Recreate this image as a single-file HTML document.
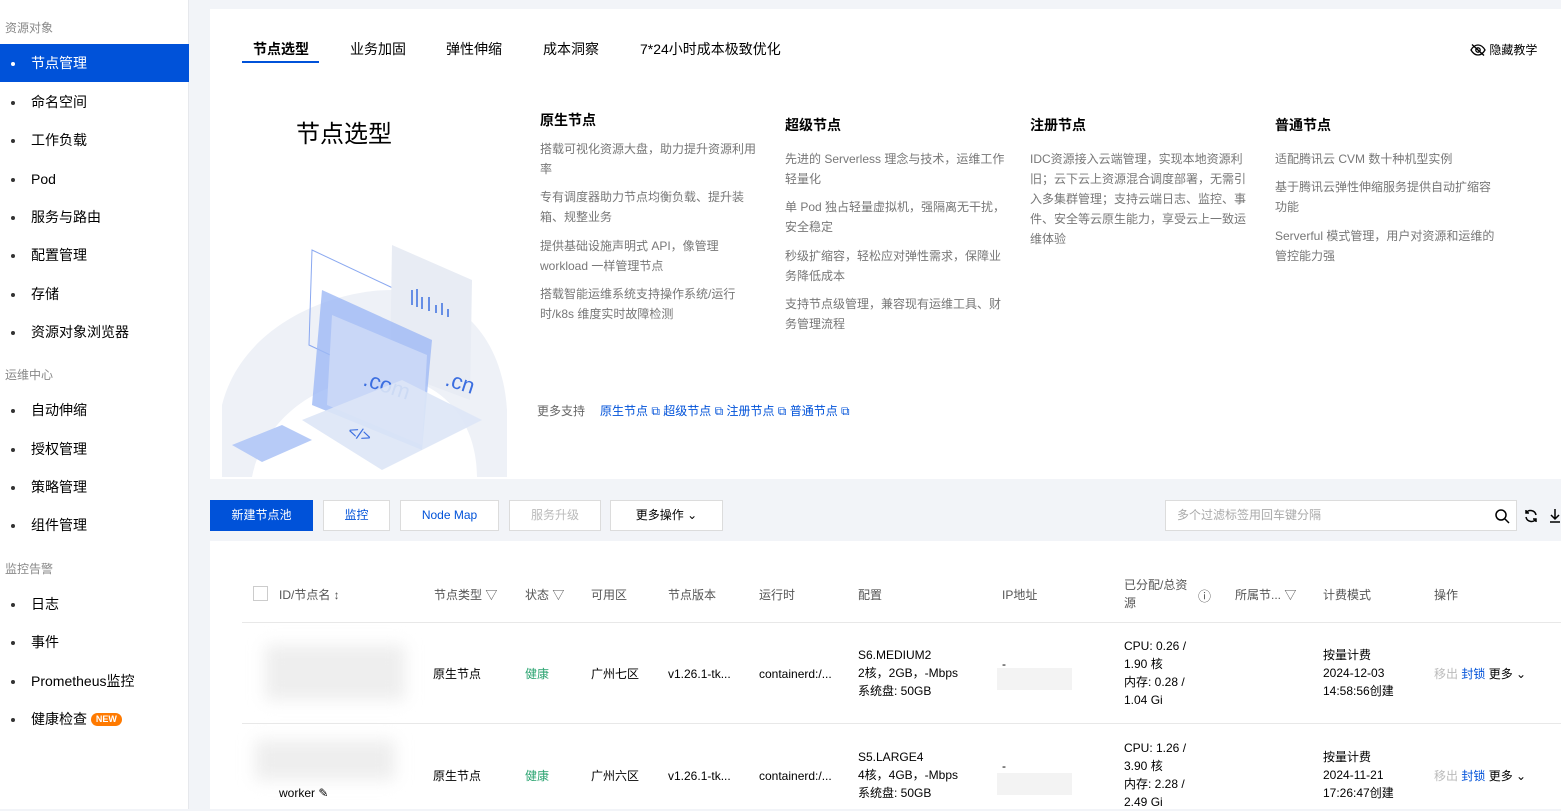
<!DOCTYPE html>
<html><head><meta charset="utf-8"><style>
*{margin:0;padding:0;box-sizing:border-box}
body{width:1561px;height:809px;overflow:hidden;background:#f2f4f8;font-family:"Liberation Sans","Noto Sans CJK SC",sans-serif;color:#000;position:relative;font-size:14px}
.a{position:absolute;white-space:nowrap}
#side{position:absolute;left:0;top:0;width:189px;height:809px;background:#fff;border-right:1px solid #e6e8ec}
.grp{position:absolute;left:5px;font-size:12px;color:#888}
.it{position:absolute;left:0;width:189px;height:38px;line-height:38px;padding-left:31px;font-size:14px;color:#000}
.it:before{content:"";position:absolute;left:11px;top:18px;width:4px;height:4px;border-radius:50%;background:#333}
.it.on{background:#0052d9;color:#fff}.it.on:before{background:#fff}
.card{position:absolute;background:#fff}
.g{color:#777;font-size:12px;line-height:20px}
.h{font-size:14px;font-weight:bold;color:#000}
.btn{position:absolute;top:500px;height:31px;line-height:29px;border:1px solid #dcdcdc;background:#fff;font-size:12px;text-align:center;color:#0052d9}
.th{position:absolute;top:586px;font-size:12px;color:#555}
.td{position:absolute;font-size:12px;color:#000;line-height:18px}
.blur{position:absolute;background:#eee;filter:blur(8px)}
</style></head><body>
<div id="side">
<div class="grp" style="top:19px">资源对象</div>
<div class="it on" style="top:44px">节点管理</div>
<div class="it" style="top:83px">命名空间</div>
<div class="it" style="top:121px">工作负载</div>
<div class="it" style="top:160px">Pod</div>
<div class="it" style="top:198px">服务与路由</div>
<div class="it" style="top:236px">配置管理</div>
<div class="it" style="top:275px">存储</div>
<div class="it" style="top:313px">资源对象浏览器</div>
<div class="grp" style="top:366px">运维中心</div>
<div class="it" style="top:391px">自动伸缩</div>
<div class="it" style="top:430px">授权管理</div>
<div class="it" style="top:468px">策略管理</div>
<div class="it" style="top:506px">组件管理</div>
<div class="grp" style="top:560px">监控告警</div>
<div class="it" style="top:585px">日志</div>
<div class="it" style="top:623px">事件</div>
<div class="it" style="top:662px">Prometheus监控</div>
<div class="it" style="top:700px">健康检查 <span style="display:inline-block;background:#ff7a00;color:#fff;font-size:9px;font-weight:bold;line-height:13px;padding:0 5px;border-radius:7px;vertical-align:2px">NEW</span></div>
</div>

<div class="card" style="left:210px;top:9px;width:1351px;height:470px"></div>
<div class="a" style="left:253px;top:39px;font-size:14px;font-weight:bold">节点选型</div>
<div class="a" style="left:242px;top:61px;width:77px;height:2px;background:#0052d9"></div>
<div class="a" style="left:350px;top:39px">业务加固</div>
<div class="a" style="left:446px;top:39px">弹性伸缩</div>
<div class="a" style="left:543px;top:39px">成本洞察</div>
<div class="a" style="left:640px;top:39px">7*24小时成本极致优化</div>
<div class="a" style="left:1470px;top:41px;font-size:12px">
<svg width="16" height="12" viewBox="0 0 16 12" style="vertical-align:-2px"><path d="M1 6C3 2.5 5.5 1 8 1s5 1.5 7 5c-2 3.5-4.5 5-7 5S3 9.5 1 6z" fill="none" stroke="#000" stroke-width="1.3"/><circle cx="8" cy="6" r="2.2" fill="none" stroke="#000" stroke-width="1.3"/><path d="M2 0.5l12 11" stroke="#000" stroke-width="1.3"/></svg> 隐藏教学</div>
<div class="a" style="left:296px;top:114px;font-size:24px">节点选型</div>
<svg class="a" style="left:222px;top:245px" width="285" height="232" viewBox="0 0 285 232">
<path d="M0 160C20 80 110 45 170 45c60 0 110 40 115 120v67h-30c0-60-40-100-90-100C90 132 40 180 30 232H0z" fill="#eef1f7"/>
<path d="M90 5l85 40-3 95-85-40z" fill="none" stroke="#8aa8f0"/>
<path d="M170 0l80 35-2 120-80-30z" fill="#e8ecf4"/>
<path d="M100 45l110 50-10 110-110-45z" fill="#9db9f5" opacity=".8"/>
<path d="M110 70l95 40-5 90-95-40z" fill="#c9d7f7"/>
<text x="140" y="140" font-size="22" fill="#3b6ee0" transform="rotate(18 140 140)">.com</text>
<text x="222" y="140" font-size="22" fill="#3b6ee0" transform="rotate(18 222 140)">.cn</text>
<path d="M80 175l100-40 80 40-100 50z" fill="#dde5f6" opacity=".9"/>
<text x="125" y="190" font-size="16" fill="#3b6ee0" transform="rotate(20 125 190)">&lt;/&gt;</text>
<path d="M10 200l50-20 30 15-50 22z" fill="#b7cbf7"/>
<path d="M190 60v-15M195 62v-18M200 64v-12M207 66v-14M214 68v-8M220 70v-12M226 72v-8" stroke="#3b6ee0" stroke-width="1.5"/>
</svg>

<div class="a h" style="left:540px;top:110px">原生节点</div>
<div class="a g" style="left:540px;top:139px;white-space:normal;width:225px">搭载可视化资源大盘，助力提升资源利用率</div>
<div class="a g" style="left:540px;top:187px;white-space:normal;width:225px">专有调度器助力节点均衡负载、提升装箱、规整业务</div>
<div class="a g" style="left:540px;top:236px;white-space:normal;width:225px">提供基础设施声明式 API，像管理 workload 一样管理节点</div>
<div class="a g" style="left:540px;top:284px;white-space:normal;width:225px">搭载智能运维系统支持操作系统/运行时/k8s 维度实时故障检测</div>
<div class="a h" style="left:785px;top:115px">超级节点</div>
<div class="a g" style="left:785px;top:149px;white-space:normal;width:228px">先进的 Serverless 理念与技术，运维工作轻量化</div>
<div class="a g" style="left:785px;top:197px;white-space:normal;width:228px">单 Pod 独占轻量虚拟机，强隔离无干扰，安全稳定</div>
<div class="a g" style="left:785px;top:246px;white-space:normal;width:222px">秒级扩缩容，轻松应对弹性需求，保障业务降低成本</div>
<div class="a g" style="left:785px;top:294px;white-space:normal;width:222px">支持节点级管理，兼容现有运维工具、财务管理流程</div>
<div class="a h" style="left:1030px;top:115px">注册节点</div>
<div class="a g" style="left:1030px;top:149px;white-space:normal;width:225px">IDC资源接入云端管理，实现本地资源利旧；云下云上资源混合调度部署，无需引入多集群管理；支持云端日志、监控、事件、安全等云原生能力，享受云上一致运维体验</div>
<div class="a h" style="left:1275px;top:115px">普通节点</div>
<div class="a g" style="left:1275px;top:149px">适配腾讯云 CVM 数十种机型实例</div>
<div class="a g" style="left:1275px;top:177px;white-space:normal;width:225px">基于腾讯云弹性伸缩服务提供自动扩缩容功能</div>
<div class="a g" style="left:1275px;top:226px;white-space:normal;width:225px">Serverful 模式管理，用户对资源和运维的管控能力强</div>
<div class="a" style="left:537px;top:402px;font-size:12px;color:#666">更多支持</div>
<div class="a" style="left:600px;top:402px;font-size:12px;color:#0052d9">原生节点 ⧉ 超级节点 ⧉ 注册节点 ⧉ 普通节点 ⧉</div>

<div class="btn" style="left:210px;width:103px;background:#0052d9;color:#fff;border-color:#0052d9">新建节点池</div>
<div class="btn" style="left:323px;width:67px">监控</div>
<div class="btn" style="left:400px;width:99px">Node Map</div>
<div class="btn" style="left:509px;width:92px;color:#bbb">服务升级</div>
<div class="btn" style="left:610px;width:113px;color:#000">更多操作 ⌄</div>
<div class="btn" style="left:1165px;width:352px;color:#aaa;text-align:left;padding-left:11px">多个过滤标签用回车键分隔</div>
<svg class="a" style="left:1494px;top:508px" width="16" height="16"><circle cx="7" cy="7" r="5" fill="none" stroke="#000" stroke-width="1.5"/><path d="M11 11l4 4" stroke="#000" stroke-width="1.5"/></svg>
<svg class="a" style="left:1523px;top:508px" width="16" height="16"><path d="M13 7A5.5 5.5 0 0 0 3 5M3 9a5.5 5.5 0 0 0 10 2M3 2v3h3M13 14v-3h-3" fill="none" stroke="#000" stroke-width="1.5"/></svg>
<svg class="a" style="left:1549px;top:508px" width="12" height="16"><path d="M6 1v10M2 7l4 4 4-4M1 14h10" fill="none" stroke="#000" stroke-width="1.5"/></svg>

<div class="card" style="left:210px;top:541px;width:1351px;height:268px"></div>
<div class="a" style="left:253px;top:586px;width:15px;height:15px;border:1px solid #ccc"></div>
<div class="th" style="left:279px">ID/节点名 ↕</div>
<div class="th" style="left:434px">节点类型 ▽</div>
<div class="th" style="left:525px">状态 ▽</div>
<div class="th" style="left:591px">可用区</div>
<div class="th" style="left:668px">节点版本</div>
<div class="th" style="left:759px">运行时</div>
<div class="th" style="left:858px">配置</div>
<div class="th" style="left:1002px">IP地址</div>
<div class="th" style="left:1124px;top:576px;line-height:18px">已分配/总资<br>源</div>
<div class="th" style="left:1198px;font-size:13px">ⓘ</div>
<div class="th" style="left:1235px">所属节... ▽</div>
<div class="th" style="left:1323px">计费模式</div>
<div class="th" style="left:1434px">操作</div>
<div class="a" style="left:242px;top:622px;width:1319px;height:1px;background:#e8e8e8"></div>
<div class="a" style="left:242px;top:723px;width:1319px;height:1px;background:#e8e8e8"></div>

<div class="blur" style="left:265px;top:645px;width:140px;height:55px"></div>
<div class="td" style="left:433px;top:665px">原生节点</div>
<div class="td" style="left:525px;top:665px;color:#2ba471">健康</div>
<div class="td" style="left:591px;top:665px">广州七区</div>
<div class="td" style="left:668px;top:665px">v1.26.1-tk...</div>
<div class="td" style="left:759px;top:665px">containerd:/...</div>
<div class="td" style="left:858px;top:646px">S6.MEDIUM2<br>2核，2GB，-Mbps<br>系统盘: 50GB</div>
<div class="td" style="left:1002px;top:655px">-</div>
<div class="a" style="left:997px;top:668px;width:75px;height:22px;background:#f3f3f3"></div>
<div class="td" style="left:1124px;top:637px">CPU: 0.26 /<br>1.90 核<br>内存: 0.28 /<br>1.04 Gi</div>
<div class="td" style="left:1323px;top:646px">按量计费<br>2024-12-03<br>14:58:56创建</div>
<div class="td" style="left:1434px;top:665px"><span style="color:#bbb">移出</span> <span style="color:#0052d9">封锁</span> 更多 ⌄</div>

<div class="blur" style="left:255px;top:740px;width:140px;height:40px"></div>
<div class="td" style="left:279px;top:784px">worker ✎</div>
<div class="td" style="left:433px;top:767px">原生节点</div>
<div class="td" style="left:525px;top:767px;color:#2ba471">健康</div>
<div class="td" style="left:591px;top:767px">广州六区</div>
<div class="td" style="left:668px;top:767px">v1.26.1-tk...</div>
<div class="td" style="left:759px;top:767px">containerd:/...</div>
<div class="td" style="left:858px;top:748px">S5.LARGE4<br>4核，4GB，-Mbps<br>系统盘: 50GB</div>
<div class="td" style="left:1002px;top:757px">-</div>
<div class="a" style="left:997px;top:773px;width:75px;height:22px;background:#f3f3f3"></div>
<div class="td" style="left:1124px;top:739px">CPU: 1.26 /<br>3.90 核<br>内存: 2.28 /<br>2.49 Gi</div>
<div class="td" style="left:1323px;top:748px">按量计费<br>2024-11-21<br>17:26:47创建</div>
<div class="td" style="left:1434px;top:767px"><span style="color:#bbb">移出</span> <span style="color:#0052d9">封锁</span> 更多 ⌄</div>
</body></html>
